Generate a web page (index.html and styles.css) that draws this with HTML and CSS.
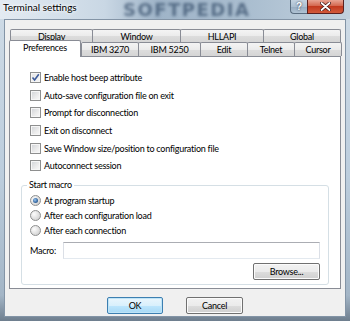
FILE: index.html
```html
<!DOCTYPE html>
<html lang="en">
  <head>
    <meta charset="UTF-8" />
    <title>Terminal settings</title>
    <link rel="stylesheet" href="styles.css">
  </head>
  <body>
    <div class="window">
      <div class="titlebar">
        <span class="title">Terminal settings</span>
        <span class="watermark">SOFTPEDIA</span>
        <div class="caption-buttons">
          <span class="btn-help">?</span>
          <span class="btn-close">
            <svg width="11" height="9" viewBox="0 0 11 9">
              <path d="M1.5 1 L9.5 8 M9.5 1 L1.5 8" stroke="#3a1010" stroke-width="3.2" stroke-linecap="round" />
              <path d="M1.5 1 L9.5 8 M9.5 1 L1.5 8" stroke="#fff" stroke-width="1.8" stroke-linecap="round" />
            </svg>
          </span>
        </div>
      </div>

      <div class="client">
        <div class="tabs">
          <div class="tab-row row-back">
            <span class="tab t-display">Display</span>
            <span class="tab t-window">Window</span>
            <span class="tab t-hllapi">HLLAPI</span>
            <span class="tab t-global">Global</span>
          </div>
          <div class="tab-row row-front">
            <span class="tab t-prefs selected">Preferences</span>
            <span class="tab t-ibm3270">IBM 3270</span>
            <span class="tab t-ibm5250">IBM 5250</span>
            <span class="tab t-edit">Edit</span>
            <span class="tab t-telnet">Telnet</span>
            <span class="tab t-cursor">Cursor</span>
          </div>
        </div>

        <div class="panel">
          <div class="checks">
            <label class="check">
              <span class="box checked">
                <svg width="9" height="9" viewBox="0 0 9 9">
                  <path d="M1.5 4.5 L3.6 7 L7.8 1.3" fill="none" stroke="#3b5a9a" stroke-width="1.6" />
                </svg>
              </span>
              Enable host beep attribute
            </label>
            <label class="check"><span class="box"></span>Auto-save configuration file on exit</label>
            <label class="check"><span class="box"></span>Prompt for disconnection</label>
            <label class="check"><span class="box"></span>Exit on disconnect</label>
            <label class="check"><span class="box"></span>Save Window size/position to configuration file</label>
            <label class="check"><span class="box"></span>Autoconnect session</label>
          </div>

          <div class="group">
            <span class="legend">Start macro</span>
            <label class="radio first"><span class="dot selected"></span>At program startup</label>
            <label class="radio"><span class="dot"></span>After each configuration load</label>
            <label class="radio"><span class="dot"></span>After each connection</label>
            <div class="macro-row">
              <span class="macro-label">Macro:</span>
              <span class="textbox"></span>
            </div>
            <div class="browse-row">
              <span class="button browse">Browse...</span>
            </div>
          </div>
        </div>

        <div class="dialog-buttons">
          <span class="button default">OK</span>
          <span class="button cancel">Cancel</span>
        </div>
      </div>
    </div>
  </body>
</html>
```

FILE: styles.css
```css
* {
  margin: 0;
  padding: 0;
  box-sizing: border-box;
}
body {
  width: 350px;
  height: 321px;
  overflow: hidden;
  font-family: Lato, "Noto Sans", sans-serif;
  font-size: 9px;
  letter-spacing: -0.25px;
  color: #000;
}

/* window frame (glass) */
.window {
  width: 350px;
  height: 321px;
  display: flex;
  flex-direction: column;
  background: linear-gradient(to bottom, #cfdbe6 0%, #bccddd 55%, #a3b5c6 92%, #6e7e8e 100%);
}
.titlebar {
  position: relative;
  height: 19px;
  display: flex;
  justify-content: space-between;
  align-items: flex-start;
  padding-left: 3px;
  background: linear-gradient(to right, #e3ebf2 0%, #c9d7e4 30%, #9fb4c8 45%, #a9bdcf 70%, #c2d1de 100%);
  overflow: hidden;
}
.title {
  position: relative;
  z-index: 1;
  font-size: 10px;
  letter-spacing: 0;
  line-height: 15px;
  text-shadow: 0 0 5px #fff, 0 0 3px #fff;
}
.watermark {
  position: absolute;
  left: 123px;
  top: 1px;
  font-family: "DejaVu Sans", sans-serif;
  font-weight: bold;
  font-size: 18px;
  line-height: 18px;
  letter-spacing: 1.5px;
  color: rgba(35, 60, 90, 0.6);
  filter: blur(1.4px);
}
.caption-buttons {
  position: relative;
  z-index: 1;
  display: flex;
  margin-right: 6px;
}
.btn-help,
.btn-close {
  height: 14px;
  display: flex;
  align-items: center;
  justify-content: center;
  border: 1px solid #5a6d80;
  border-top: none;
}
.btn-help {
  width: 17px;
  border-right: none;
  border-radius: 0 0 0 4px;
  background: linear-gradient(to bottom, #c3d2e0 0%, #adc0d2 50%, #97acc1 51%, #b0c3d4 100%);
  color: #fff;
  font-family: "Liberation Sans", sans-serif;
  font-weight: bold;
  font-size: 10px;
  text-shadow: 0 0 2px #223;
}
.btn-close {
  width: 37px;
  border-color: #5a2020;
  border-radius: 0 0 4px 0;
  background: linear-gradient(to bottom, #e8a493 0%, #d4674f 45%, #c2391e 50%, #d25a3c 100%);
}

/* client area */
.client {
  flex: 1;
  margin: 0 4px 4px;
  border: 1px solid #8394a6;
  background: #f0f0f0;
  padding: 9px 0 0 4px;
}

/* tabs */
.tab-row {
  display: flex;
}
.row-back {
  margin-left: 1px;
}
.tab {
  display: flex;
  align-items: center;
  justify-content: center;
  border: 1px solid #898c95;
  border-bottom: none;
  border-radius: 2px 2px 0 0;
  background: linear-gradient(to bottom, #f4f4f4 0%, #ebebeb 50%, #dddddd 51%, #d5d5d5 100%);
  margin-left: -1px;
  line-height: 1;
}
.tab:first-child {
  margin-left: 0;
}
.row-back .tab {
  height: 13px;
}
.row-front .tab {
  height: 14px;
}
.row-front .tab.selected {
  position: relative;
  z-index: 2;
  height: 17px;
  margin-top: -2px;
  margin-bottom: -1px;
  padding-bottom: 3px;
  background: #fff;
}
.t-display { width: 83px; }
.t-window { width: 89px; }
.t-hllapi { width: 84px; }
.t-global { width: 78px; }
.t-prefs { width: 72px; }
.t-ibm3270 { width: 58px; margin-left: 0; }
.t-ibm5250 { width: 63px; }
.t-edit { width: 48px; }
.t-telnet { width: 48px; }
.t-cursor { width: 48px; }

/* panel */
.panel {
  width: 332px;
  height: 233px;
  border: 1px solid #898c95;
  background: #fff;
  padding: 12px 0 0 20px;
}
.check,
.radio {
  display: flex;
  align-items: center;
  gap: 3px;
  white-space: nowrap;
}
.check {
  height: 17.6px;
}
.box {
  width: 11px;
  height: 11px;
  border: 1px solid #8e8f8f;
  box-shadow: inset 0 0 0 1px #f6f6f6;
  background: linear-gradient(135deg, #cfd2d6 0%, #ececec 60%, #fafafa 100%);
  display: flex;
  align-items: center;
  justify-content: center;
}
.box.checked {
  background: linear-gradient(135deg, #e4e4e4 0%, #f6f6f6 100%);
}

/* group box */
.group {
  width: 308px;
  height: 100px;
  margin: 10px 0 0 -9px;
  border: 1px solid #d5dfe5;
  border-radius: 3px;
  padding: 0 8px 0 8px;
}
.legend {
  display: block;
  width: max-content;
  height: 12px;
  margin: -7px 0 0 -3px;
  padding: 0 2px;
  background: #fff;
  line-height: 12px;
}
.radio {
  height: 14.6px;
}
.radio.first {
  margin-top: 3px;
}
.dot {
  width: 11px;
  height: 11px;
  border-radius: 50%;
  border: 1px solid #8e8f8f;
  background: radial-gradient(circle at 35% 35%, #fdfdfd 0%, #e2e2e2 50%, #c8c8c8 100%);
  display: flex;
  align-items: center;
  justify-content: center;
}
.dot.selected::after {
  content: "";
  width: 5px;
  height: 5px;
  border-radius: 50%;
  background: radial-gradient(circle at 40% 40%, #9cc6ef 0%, #3b6fa8 55%, #1d3e66 100%);
}
.macro-row {
  display: flex;
  align-items: center;
  margin-top: 5px;
}
.macro-label {
  width: 33px;
}
.textbox {
  width: 258px;
  height: 17px;
  border: 1px solid #dbdfe6;
  border-top-color: #abadb3;
  border-bottom-color: #e3e9ef;
  background: #fff;
}
.browse-row {
  display: flex;
  justify-content: flex-end;
  margin-top: 4px;
}

/* buttons */
.button {
  display: flex;
  align-items: center;
  justify-content: center;
  height: 17px;
  border: 1px solid #707070;
  border-radius: 2px;
  box-shadow: inset 0 0 0 1px #fbfbfb;
  background: linear-gradient(to bottom, #f2f2f2 0%, #ebebeb 50%, #dddddd 51%, #cfcfcf 100%);
}
.browse {
  width: 67px;
}
.dialog-buttons {
  display: flex;
  justify-content: center;
  gap: 23px;
  margin: 8px 0 0 -4px;
}
.button.default {
  width: 56px;
  border-color: #3c7fb1;
  box-shadow: inset 0 0 0 1px #bfe4f7;
  background: linear-gradient(to bottom, #eaf6fd 0%, #d9f0fc 50%, #bee6fd 51%, #a7d9f5 100%);
}
.button.cancel {
  width: 57px;
}
```
